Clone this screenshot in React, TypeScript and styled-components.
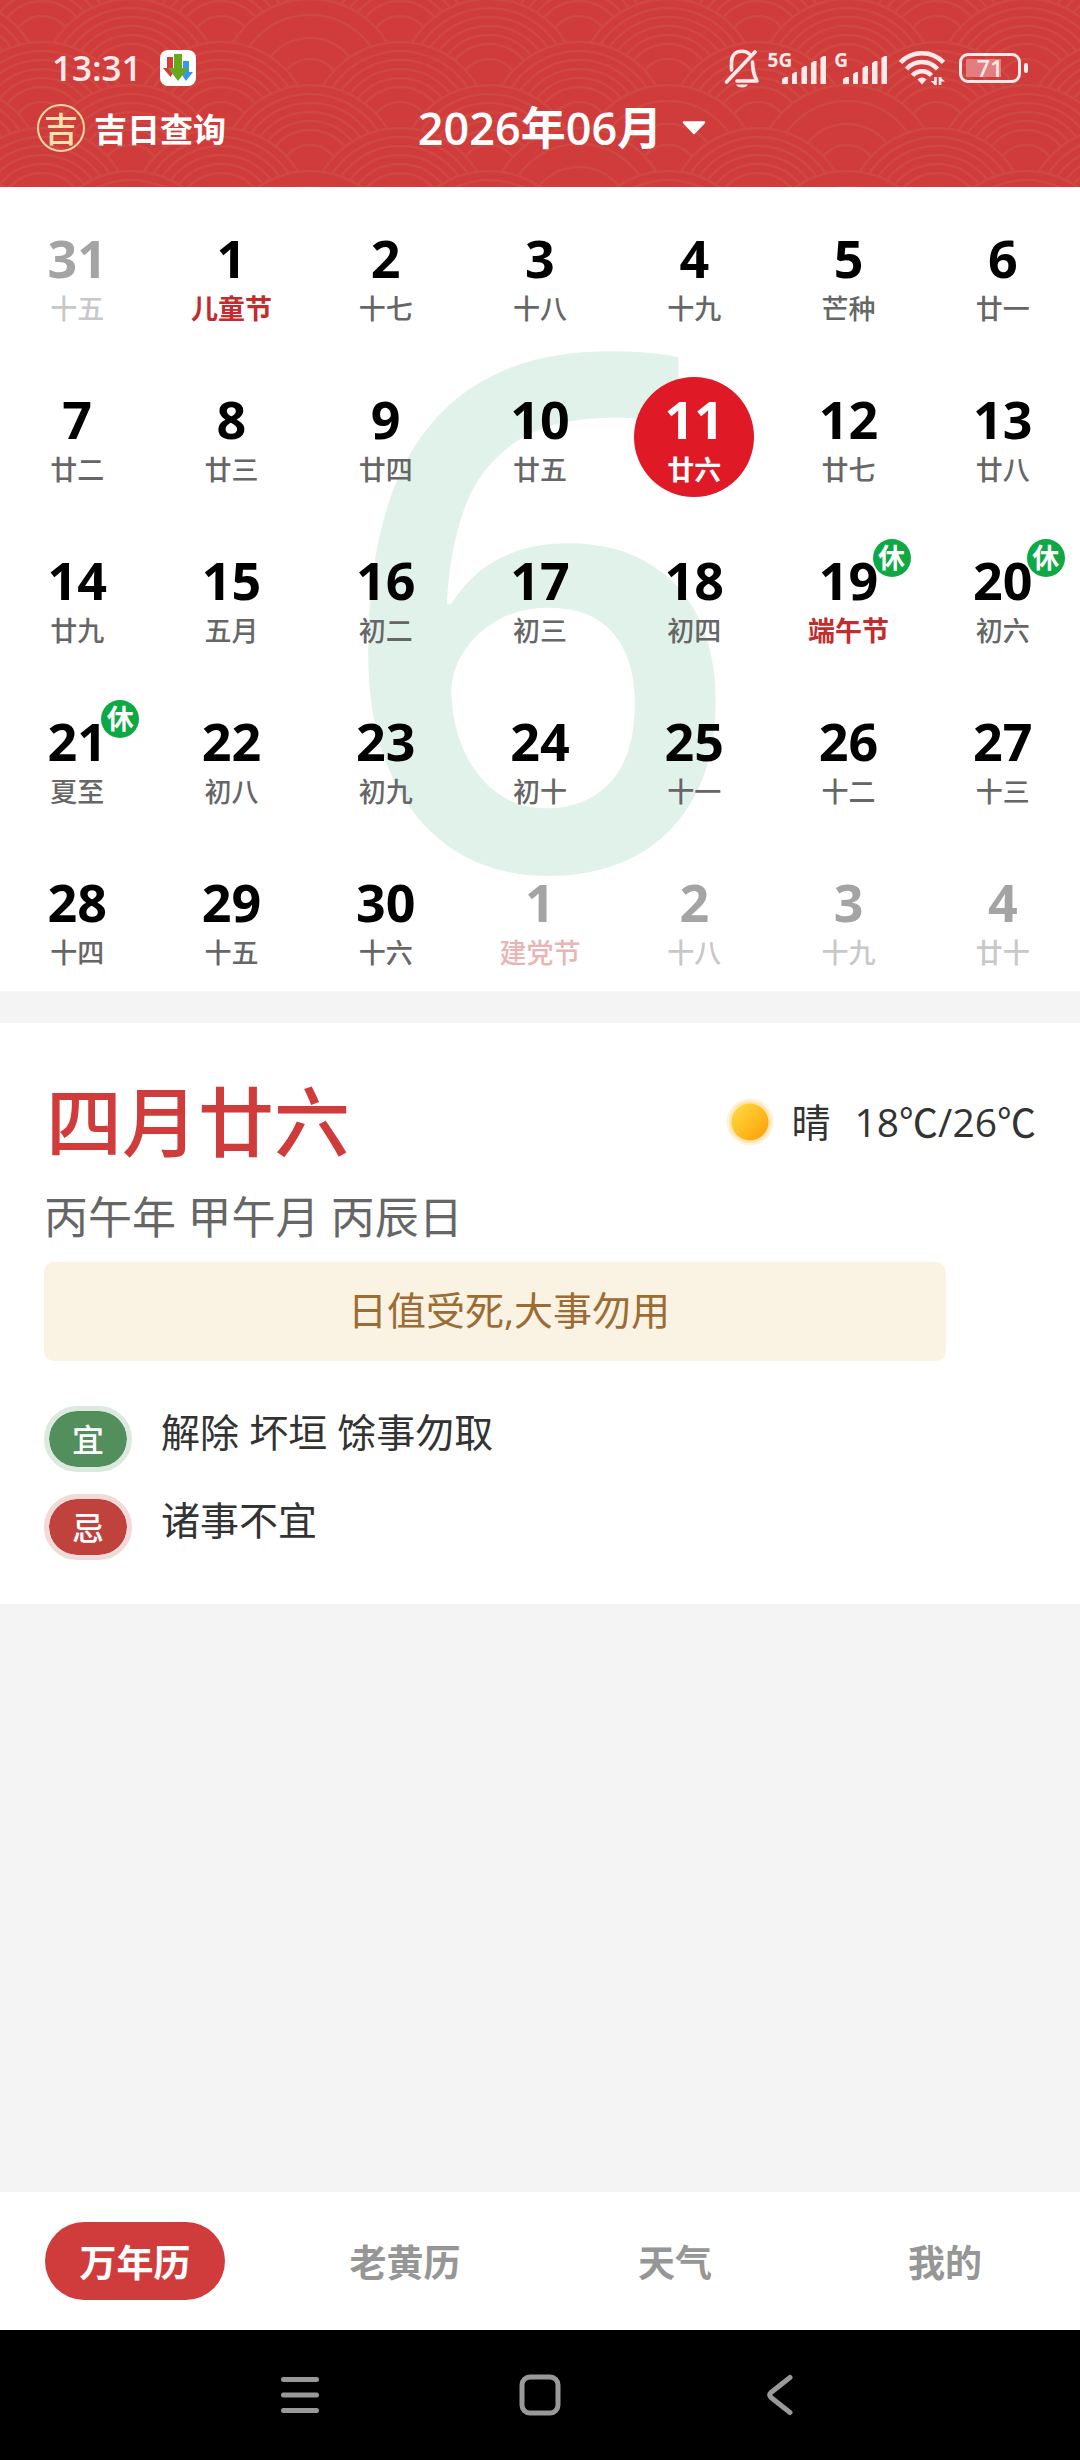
import React, { useState } from "react";
import styled, { createGlobalStyle, css } from "styled-components";

const RED = "#cf3c3b";
const LINE = "#cf4841";
const FONT = `"Open Sans", "Noto Sans CJK SC", sans-serif`;
const CJK = `"Noto Sans CJK SC", sans-serif`;

const GlobalStyle = createGlobalStyle`
  *, *::before, *::after { box-sizing: border-box; }
  body { margin: 0; background: #f4f4f4; font-family: ${FONT}; }
  button { border: 0; padding: 0; background: none; font: inherit; color: inherit; cursor: pointer; }
`;

const Page = styled.div`
  display: flex;
  flex-direction: column;
  min-height: 100vh;
`;

/* ---------- header ---------- */

const Header = styled.header`
  position: relative;
  overflow: hidden;
  background: ${RED};
  color: #fff;
  padding: 48px 37px 29px;
`;

const Waves = styled.svg`
  position: absolute;
  top: 0;
  left: 0;
  width: 100%;
  height: 100%;
`;

const StatusBar = styled.div`
  position: relative;
  display: flex;
  align-items: center;
  justify-content: space-between;
  height: 40px;
  padding: 0 15px;
  color: #ffe9e9;
`;

const StatusGroup = styled.div<{ $gap: number }>`
  display: flex;
  align-items: center;
  gap: ${(p) => p.$gap}px;
`;

const Clock = styled.time`
  font-size: 35px;
  line-height: 40px;
  font-weight: 600;
`;

const Signal = styled.span`
  display: flex;
  align-items: flex-end;
  height: 32px;
`;

const SignalLabel = styled.span<{ $overlap: number }>`
  align-self: flex-start;
  margin-right: -${(p) => p.$overlap}px;
  font-size: 19px;
  line-height: 16px;
  font-weight: 700;
`;

const Battery = styled.span`
  display: flex;
  align-items: center;
  gap: 3px;
  &::after {
    content: "";
    width: 4px;
    height: 10px;
    border-radius: 2px;
    background: #ffe9e9;
  }
`;

const BatteryBody = styled.span`
  display: flex;
  align-items: center;
  justify-content: center;
  width: 62px;
  height: 30px;
  border: 3px solid #ffe9e9;
  border-radius: 9px;
  font-size: 23px;
  line-height: 24px;
  font-weight: 600;
  background: linear-gradient(90deg, #e47d7d 0 35px, transparent 35px) 4px 3px / 46px 18px no-repeat;
`;

const Toolbar = styled.div`
  position: relative;
  display: grid;
  grid-template-columns: 1fr auto 1fr;
  align-items: center;
  height: 70px;
  padding-top: 10px;
`;

const LuckyLink = styled.a`
  display: flex;
  align-items: center;
  gap: 9px;
  color: #fff;
  text-decoration: none;
  font-family: ${CJK};
  font-size: 33px;
  line-height: 48px;
  font-weight: 700;
`;

const Seal = styled.span`
  display: flex;
  align-items: center;
  justify-content: center;
  width: 48px;
  height: 48px;
  border: 2px solid #fbd6a0;
  border-radius: 50%;
  color: #fde0ae;
  font-size: 34px;
  font-weight: 500;
`;

const MonthButton = styled.button`
  display: flex;
  align-items: center;
  gap: 20px;
  padding-left: 44px;
  font-size: 45px;
  line-height: 56px;
  font-weight: 600;
`;

/* ---------- calendar ---------- */

const Calendar = styled.section`
  position: relative;
  background: #fff;
`;

const Watermark = styled.span`
  position: absolute;
  inset: 0;
  display: flex;
  align-items: center;
  justify-content: center;
  padding-top: 6px;
  font-size: 716px;
  line-height: 1;
  font-weight: 600;
  color: #e1f2eb;
  pointer-events: none;
`;

const Days = styled.div`
  position: relative;
  display: grid;
  grid-template-columns: repeat(7, 1fr);
  grid-auto-rows: 160px;
  row-gap: 1px;
  justify-items: center;
  align-items: end;
`;

const DayButton = styled.button<{ $selected: boolean; $faded: boolean; $festival: boolean }>`
  position: relative;
  display: flex;
  flex-direction: column;
  align-items: center;
  width: 120px;
  height: 120px;
  margin-bottom: 11px;
  padding-top: 12px;
  border-radius: 50%;
  ${(p) =>
    p.$selected &&
    css`
      background: #df1926;
    `}
  --day: ${(p) => (p.$selected ? "#fff" : p.$faded ? "#a4a4a4" : "#000")};
  --lunar: ${(p) =>
    p.$selected
      ? "#fff"
      : p.$festival
        ? p.$faded
          ? "#eab4b5"
          : "#c32b2d"
        : p.$faded
          ? "#c8c8c8"
          : "#666"};
`;

const DayNumber = styled.span`
  color: var(--day);
  font-size: 52px;
  line-height: 60px;
  font-weight: 700;
`;

const Lunar = styled.span<{ $strong: boolean }>`
  color: var(--lunar);
  font-family: ${CJK};
  font-size: 27px;
  line-height: 40px;
  font-weight: ${(p) => (p.$strong ? 700 : 500)};
`;

const RestBadge = styled.span`
  position: absolute;
  top: 1px;
  right: -2px;
  width: 38px;
  height: 38px;
  border-radius: 50%;
  background: #0ea844;
  color: #fff;
  font-family: ${CJK};
  font-size: 27px;
  line-height: 36px;
  font-weight: 700;
  text-align: center;
`;

/* ---------- day details ---------- */

const Details = styled.section`
  margin-top: 32px;
  padding: 54px 44px 44px;
  background: #fff;
`;

const DetailsHead = styled.div`
  display: flex;
  align-items: flex-start;
  justify-content: space-between;
  height: 86px;
`;

const LunarTitle = styled.h1`
  margin: 0;
  padding-left: 2px;
  color: ${RED};
  font-family: ${CJK};
  font-size: 76px;
  line-height: 82px;
  font-weight: 500;
`;

const Weather = styled.div`
  display: flex;
  align-items: center;
  height: 90px;
  color: #333;
  font-size: 39px;
  line-height: 48px;
  svg { margin-right: 17px; }
`;

const Temperature = styled.span`
  margin-left: 24px;
`;

const Pillars = styled.p`
  margin: 21px 0 12px;
  color: #666;
  font-size: 44px;
  line-height: 66px;
`;

const Notice = styled.p`
  margin: 0 90px 45px 0;
  padding: 18px 0 22px 28px;
  border-radius: 10px;
  background: #faf2e2;
  color: #9b6c34;
  font-size: 39px;
  line-height: 59px;
  text-align: center;
`;

const Advice = styled.dl`
  display: grid;
  grid-template-columns: 88px 1fr;
  gap: 22px 29px;
  margin: 0;
`;

const AdviceTag = styled.dt<{ $bg: string; $ring: string }>`
  height: 66px;
  border: 5px solid ${(p) => p.$ring};
  border-radius: 33px;
  background: ${(p) => p.$bg} padding-box;
  color: #fff;
  font-family: ${CJK};
  font-size: 32px;
  line-height: 54px;
  font-weight: 500;
  text-align: center;
`;

const AdviceText = styled.dd`
  margin: 0;
  color: #333;
  font-size: 39px;
  line-height: 52px;
`;

/* ---------- bottom bars ---------- */

const TabBar = styled.nav`
  display: grid;
  grid-template-columns: repeat(4, 1fr);
  place-items: center;
  height: 138px;
  margin-top: auto;
  background: #fff;
`;

const Tab = styled.button<{ $active: boolean }>`
  width: 180px;
  height: 78px;
  border-radius: 39px;
  background: ${(p) => (p.$active ? RED : "transparent")};
  color: ${(p) => (p.$active ? "#fff" : "#969696")};
  font-family: ${CJK};
  font-size: 37px;
  line-height: 78px;
  font-weight: 700;
`;

const SystemNav = styled.nav`
  display: grid;
  grid-template-columns: repeat(3, 240px);
  place-content: center;
  place-items: center;
  height: 130px;
  background: #000;
`;

const SystemButton = styled.button`
  display: flex;
`;

/* ---------- drawings ---------- */

function WavePattern() {
  const hills: React.ReactNode[] = [];
  for (let row = -2; row < 5; row++) {
    const odd = Math.abs(row) % 2 === 1;
    for (let col = -2; col < 6; col++) {
      const cx = 310 + col * 179 + (odd ? 90 : 0);
      const top = -1 + row * 43;
      const plain = (row === 0 && col === 0) || (row === 2 && (col === 2 || col === 3)) || (row === 3 && col === 1) || (row === 4 && (col === 0 || col === 3));
      const radii = plain ? [74, 51, 30] : [81, 72, 63, 54, 45, 30];
      hills.push(
        <g key={`${row}/${col}`} fill={RED} stroke={LINE} strokeWidth={2.6}>
          <circle cx={cx} cy={top + 90} r={90} />
          {radii.map((r) => (
            <circle key={r} cx={cx} cy={top + 90} r={r} fill="none" />
          ))}
        </g>,
      );
    }
  }
  return (
    <Waves viewBox="0 0 1080 187" preserveAspectRatio="xMinYMin slice" aria-hidden="true">
      {hills}
    </Waves>
  );
}

const AppIcon = () => (
  <svg width="36" height="36" viewBox="0 0 36 36" aria-hidden="true">
    <rect width="36" height="36" rx="8" fill="#fff" />
    <path d="M7 7h6v11h3l-5.500 9L3 18h4z" fill="#d93a35" />
    <path d="M23 11h6v11h4l-7 9-6-9h3z" fill="#3a97e8" />
    <path d="M14 4h8v14h6l-10 13L8 18h6z" fill="#68a81c" />
  </svg>
);

const BellOff = () => (
  <svg width="36" height="40" viewBox="0 0 36 40" fill="none" stroke="currentColor" strokeWidth="3.600" strokeLinecap="round" aria-hidden="true">
    <path d="M7.500 22V14.500C7.500 7 12 3.300 18 3.300c3 0 5.400.9 7.200 2.500" />
    <path d="M28.500 14c.3 8 .8 12 4.500 19H13" strokeLinejoin="round" />
    <path d="M31 4 2.500 34" />
    <path d="M12 36.500h12c-1 2-3 3-6 3s-5-1-6-3z" fill="currentColor" stroke="none" />
  </svg>
);

const Bars = () => (
  <svg width="44" height="28" viewBox="0 0 44 28" fill="currentColor" aria-hidden="true">
    <path d="M0 23l3-2h3v7H0zM10 18l3-2h2v12h-5zM19.500 12l3-2h2.500v18h-5.500zM29 7l3-2h2.500v23H29zM38.500 2l3-2H44v28h-5.500z" />
  </svg>
);

const Wifi = () => (
  <svg width="46" height="36" viewBox="0 0 46 36" fill="none" stroke="currentColor" strokeWidth="4.500" aria-hidden="true">
    <path d="M1.500 12.500C13 .2 33 .2 44.500 12.500" />
    <path d="M7.500 19c8.500-9.200 22.500-9.200 31 0" />
    <path d="M13.500 25.500c5.200-5.700 13.800-5.700 19 0" />
    <path d="M18.500 29.500c2.600-2.800 6.400-2.800 9 0L23 34.500z" fill="currentColor" stroke="none" />
    <path d="M36.500 27v8M41 35v-8" strokeWidth="2.600" />
    <path d="M31.500 31h5v4.500zM41 31.500h5L41 27z" fill="currentColor" stroke="none" />
  </svg>
);

const Caret = () => (
  <svg width="24" height="14" viewBox="0 0 24 14" aria-hidden="true">
    <path d="M2 1.500h20L12 12z" fill="#fff" stroke="#fff" strokeWidth="2.500" strokeLinejoin="round" />
  </svg>
);

const Sun = () => (
  <svg width="48" height="48" viewBox="0 0 48 48" aria-hidden="true">
    <defs>
      <linearGradient id="sun" x1="0.100" y1="0.200" x2="0.800" y2="0.900">
        <stop offset="0" stopColor="#fdd43a" />
        <stop offset="0.550" stopColor="#fdbb20" />
        <stop offset="1" stopColor="#fba610" />
      </linearGradient>
    </defs>
    <circle cx="24" cy="24" r="23.500" fill="#fdf3dc" />
    <circle cx="24" cy="24" r="21" fill="#fde5b0" />
    <circle cx="24" cy="24" r="18.500" fill="url(#sun)" />
  </svg>
);

const MenuIcon = () => (
  <svg width="40" height="40" viewBox="0 0 40 40" stroke="#999" strokeWidth="5" strokeLinecap="round" aria-hidden="true">
    <path d="M3.500 4.500h33M3.500 20h33M3.500 35.500h33" />
  </svg>
);

const HomeIcon = () => (
  <svg width="42" height="42" viewBox="0 0 42 42" fill="none" stroke="#999" strokeWidth="5" aria-hidden="true">
    <rect x="3" y="3" width="36" height="36" rx="8" />
  </svg>
);

const BackIcon = () => (
  <svg width="28" height="42" viewBox="0 0 28 42" fill="none" stroke="#999" strokeWidth="5" strokeLinecap="round" strokeLinejoin="round" aria-hidden="true">
    <path d="M24 3.500 5 18.500Q2.500 21 5 23.500L24 38.500" />
  </svg>
);

/* ---------- data ---------- */

type Day = { n: number; lunar: string; festival?: boolean; faded?: boolean; rest?: boolean };

const lunarJune =
  "儿童节 十七 十八 十九 芒种 廿一 廿二 廿三 廿四 廿五 廿六 廿七 廿八 廿九 五月 初二 初三 初四 端午节 初六 夏至 初八 初九 初十 十一 十二 十三 十四 十五 十六".split(" ");

const days: Day[] = [
  { n: 31, lunar: "十五", faded: true },
  ...lunarJune.map((lunar, i) => ({
    n: i + 1,
    lunar,
    festival: lunar.endsWith("节"),
    rest: i + 1 >= 19 && i + 1 <= 21,
  })),
  { n: 1, lunar: "建党节", faded: true, festival: true },
  { n: 2, lunar: "十八", faded: true },
  { n: 3, lunar: "十九", faded: true },
  { n: 4, lunar: "廿十", faded: true },
];

const tabs = ["万年历", "老黄历", "天气", "我的"];

export default function App() {
  const [selected, setSelected] = useState(11);
  const [tab, setTab] = useState(0);

  return (
    <Page>
      <GlobalStyle />
      <Header>
        <WavePattern />
        <StatusBar>
          <StatusGroup $gap={18}>
            <Clock>13:31</Clock>
            <AppIcon />
          </StatusGroup>
          <StatusGroup $gap={12}>
            <StatusGroup $gap={8}>
              <BellOff />
              <Signal>
                <SignalLabel $overlap={10}>5G</SignalLabel>
                <Bars />
              </Signal>
              <Signal>
                <SignalLabel $overlap={5}>G</SignalLabel>
                <Bars />
              </Signal>
            </StatusGroup>
            <StatusGroup $gap={14}>
              <Wifi />
              <Battery>
                <BatteryBody>71</BatteryBody>
              </Battery>
            </StatusGroup>
          </StatusGroup>
        </StatusBar>
        <Toolbar>
          <LuckyLink href="#lucky">
            <Seal>吉</Seal>
            吉日查询
          </LuckyLink>
          <MonthButton>
            2026年06月
            <Caret />
          </MonthButton>
        </Toolbar>
      </Header>

      <Calendar>
        <Watermark>6</Watermark>
        <Days>
          {days.map((d, i) => (
            <DayButton
              key={i}
              $selected={i === selected}
              $faded={!!d.faded}
              $festival={!!d.festival}
              onClick={() => setSelected(i)}
            >
              <DayNumber>{d.n}</DayNumber>
              <Lunar $strong={i === selected || (!!d.festival && !d.faded)}>{d.lunar}</Lunar>
              {d.rest && <RestBadge>休</RestBadge>}
            </DayButton>
          ))}
        </Days>
      </Calendar>

      <Details>
        <DetailsHead>
          <LunarTitle>四月廿六</LunarTitle>
          <Weather>
            <Sun />
            <span>晴</span>
            <Temperature>18℃/26℃</Temperature>
          </Weather>
        </DetailsHead>
        <Pillars>丙午年 甲午月 丙辰日</Pillars>
        <Notice>日值受死,大事勿用</Notice>
        <Advice>
          <AdviceTag $bg="#538f5d" $ring="#dce9df">宜</AdviceTag>
          <AdviceText>解除 坏垣 馀事勿取</AdviceText>
          <AdviceTag $bg="#bf423c" $ring="#f2dad9">忌</AdviceTag>
          <AdviceText>诸事不宜</AdviceText>
        </Advice>
      </Details>

      <TabBar>
        {tabs.map((t, i) => (
          <Tab key={t} $active={i === tab} onClick={() => setTab(i)}>
            {t}
          </Tab>
        ))}
      </TabBar>
      <SystemNav>
        <SystemButton aria-label="Recent apps"><MenuIcon /></SystemButton>
        <SystemButton aria-label="Home"><HomeIcon /></SystemButton>
        <SystemButton aria-label="Back"><BackIcon /></SystemButton>
      </SystemNav>
    </Page>
  );
}
